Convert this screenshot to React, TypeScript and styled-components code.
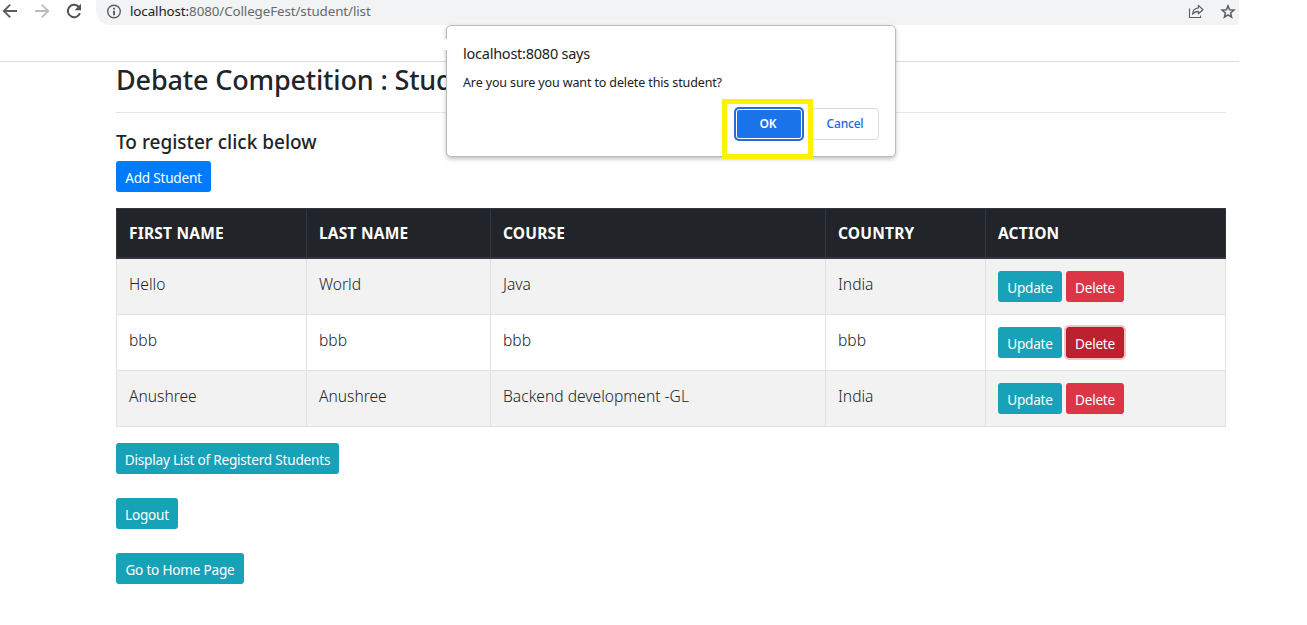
import React from "react";
import styled, { createGlobalStyle, css } from "styled-components";

const GlobalStyle = createGlobalStyle`
  *, *::before, *::after { box-sizing: border-box; }
  body {
    margin: 0;
    background: #fff;
    color: #212529;
    font-family: "Noto Sans", "Open Sans", sans-serif;
    font-size: 16px;
    line-height: 1.5;
    overflow: hidden;
  }
`;

const Screen = styled.div`
  position: relative;
  width: 1307px;
  height: 625px;
  overflow: hidden;
`;

const Toolbar = styled.header`
  display: flex;
  width: 1239px;
  height: 61px;
  align-items: flex-start;
`;

const NavIcons = styled.div`
  display: flex;
  gap: 16px;
  padding: 3px 0 0 2px;
  width: 96px;
  svg { display: block; flex: none; }
`;

const AddressBar = styled.div`
  display: flex;
  flex: 1;
  height: 25px;
  padding: 0 4px 2px 10px;
  align-items: center;
  background: #f1f3f4;
  border-radius: 0 0 4px 14px;
  svg { display: block; flex: none; }
`;

const Url = styled.span`
  flex: 1;
  margin: -1px 0 0 8px;
  font-size: 13.4px;
  line-height: 20px;
  letter-spacing: -0.11px;
  color: #666a6e;
  b { font-weight: 400; color: #202124; }
`;

const BarActions = styled.div`
  display: flex;
  gap: 16px;
  margin-right: -1px;
`;

const Page = styled.main`
  width: 1239px;
  padding: 0 13px 0 116px;
  border-top: 1px solid #d9dbdd;
`;

const Title = styled.h3`
  margin: 0;
  height: 34px;
  font-size: 27px;
  font-weight: 500;
  line-height: 36px;
  letter-spacing: -0.16px;
  white-space: nowrap;
`;

const Rule = styled.hr`
  margin: 16px 0;
  border: 0;
  border-top: 1px solid #e5e5e5;
`;

const Subtitle = styled.h5`
  margin: 0 0 8px;
  height: 24px;
  font-size: 19px;
  font-weight: 500;
  line-height: 26px;
`;

const tones = { primary: "#007bff", info: "#17a2b8", danger: "#dc3545" };

const Button = styled.button<{ $tone: keyof typeof tones; $w: number; $pressed?: boolean }>`
  display: block;
  flex: none;
  width: ${(p) => p.$w}px;
  height: 31px;
  padding: 2px 0 0;
  border: 0;
  border-radius: 3px;
  background: ${(p) => tones[p.$tone]};
  color: #fff;
  font: 400 13.6px/21px "Noto Sans", sans-serif;
  letter-spacing: -0.22px;
  white-space: nowrap;
  ${(p) =>
    p.$pressed &&
    css`
      background: #bd2130;
      border: 1px solid #b21f2d;
      box-shadow: 0 0 0 2px rgba(225, 83, 97, 0.35);
    `}
`;

const Table = styled.table`
  width: 1109px;
  margin: 16px 0;
  table-layout: fixed;
  border-collapse: collapse;
`;

const Th = styled.th`
  height: 49px;
  padding: 0 12px;
  border: 1px solid #32383e;
  border-bottom-width: 2px;
  background: #212529;
  color: #fff;
  font-size: 15.5px;
  font-weight: 700;
  line-height: 24px;
  letter-spacing: 0.2px;
  text-align: left;
`;

const Tr = styled.tr`
  height: 56px;
  &:nth-child(odd) { background: #f2f2f2; }
`;

const Td = styled.td`
  padding: 12px;
  border: 1px solid #dee2e6;
  line-height: 26px;
  font-size: 15.6px;
  font-weight: 300;
  vertical-align: top;
`;

const Actions = styled.div`
  display: flex;
  gap: 4px;
`;

const Links = styled.nav`
  display: flex;
  flex-direction: column;
  gap: 24px;
`;

const Dialog = styled.section`
  position: absolute;
  left: 446px;
  top: 25px;
  width: 450px;
  height: 132px;
  padding: 17px 17px 0;
  background: #fff;
  border: 1px solid #b9bbbd;
  border-radius: 5px;
  box-shadow: 0 2px 4px rgba(0, 0, 0, 0.25);
  color: #202124;
`;

const DialogTitle = styled.div`
  margin-left: -1px;
  font-size: 14.5px;
  line-height: 20px;
  letter-spacing: -0.24px;
`;

const DialogText = styled.div`
  margin: 10px 0 0 -1px;
  font-size: 12.5px;
  line-height: 20px;
  letter-spacing: -0.13px;
`;

const DialogButtons = styled.div`
  display: flex;
  justify-content: flex-end;
  align-items: center;
  gap: 9px;
  margin: 15px -1px 0 0;
`;

const DialogButton = styled.button<{ $primary?: boolean }>`
  width: 68px;
  height: 32px;
  padding: 0;
  border: 1px solid #dadce0;
  border-radius: 4px;
  background: #fff;
  color: #2267dc;
  font: 500 12px/20px "Noto Sans", sans-serif;
  letter-spacing: -0.2px;
  ${(p) =>
    p.$primary &&
    css`
      width: 66px;
      height: 30px;
      padding-right: 2px;
      border-color: #fff;
      border-radius: 3px;
      background: #1a73e8;
      color: #fff;
      font-weight: 600;
      box-shadow: 0 0 0 2px #2a69cf;
    `}
`;

const Highlight = styled.div`
  position: absolute;
  left: 722px;
  top: 99px;
  width: 91px;
  height: 60px;
  border: 5px solid #fff200;
`;

const EdgeGap = styled.div`
  position: absolute;
  left: 440px;
  top: 39px;
  width: 7px;
  height: 11px;
  background: #fff;
`;

const BackIcon = () => (
  <svg width="16" height="16" viewBox="0 0 16 16" fill="none" stroke="#5a5d61" strokeWidth="1.9">
    <path d="M15 8H2.5M8.2 1.6 1.8 8l6.4 6.4" />
  </svg>
);

const ForwardIcon = () => (
  <svg width="16" height="16" viewBox="0 0 16 16" fill="none" stroke="#bbbdc0" strokeWidth="1.9">
    <path d="M1 8h12.5M7.8 1.6 14.2 8l-6.4 6.4" />
  </svg>
);

const ReloadIcon = () => (
  <svg width="16" height="16" viewBox="0 0 16 16">
    <path d="M13.9 10.1A6.2 6.2 0 1 1 12.5 3.7L14 5.2" fill="none" stroke="#505357" strokeWidth="2" />
    <path d="M15 .8v6.4H8.6z" fill="#505357" />
  </svg>
);

const InfoIcon = () => (
  <svg width="16" height="16" viewBox="0 0 16 16">
    <circle cx="8" cy="7.5" r="6.3" fill="none" stroke="#5a5d61" strokeWidth="1.4" />
    <path d="M7.1 3.8h1.8v1.8H7.1zM7.1 6.7h1.8v4.6H7.1z" fill="#505357" />
  </svg>
);

const ShareIcon = () => (
  <svg width="16" height="16" viewBox="0 0 16 16" fill="none" stroke="#5a5d61">
    <path d="M1.5 4.5v9h11v-2" strokeWidth="1.1" />
    <path d="M4.6 10.2C4.6 6.2 7 4.2 10.4 4V1.4L15 5.7l-4.6 4V7.4C8 7.4 6.1 8.1 4.6 10.2z" strokeWidth="1.2" strokeLinejoin="round" />
  </svg>
);

const StarIcon = () => (
  <svg width="16" height="16" viewBox="0 0 16 16" fill="none" stroke="#5a5d61" strokeWidth="1.5">
    <path d="m8 1.9 1.6 3.9 4.3.3-3.3 2.8 1 4.2L8 10.9l-3.6 2.2 1-4.2-3.3-2.8 4.3-.3z" />
  </svg>
);

const columns = [
  { label: "FIRST NAME", width: 190 },
  { label: "LAST NAME", width: 184 },
  { label: "COURSE", width: 335 },
  { label: "COUNTRY", width: 160 },
  { label: "ACTION", width: 240 },
];

const students = [
  ["Hello", "World", "Java", "India"],
  ["bbb", "bbb", "bbb", "bbb"],
  ["Anushree", "Anushree", "Backend development -GL", "India"],
];

const selectedStudent = 1;

export default function App() {
  return (
    <Screen>
      <GlobalStyle />
      <Toolbar>
        <NavIcons>
          <BackIcon />
          <ForwardIcon />
          <ReloadIcon />
        </NavIcons>
        <AddressBar>
          <InfoIcon />
          <Url><b>localhost:</b>8080/CollegeFest/student/list</Url>
          <BarActions>
            <ShareIcon />
            <StarIcon />
          </BarActions>
        </AddressBar>
      </Toolbar>
      <Page>
        <Title>Debate Competition : Stud</Title>
        <Rule />
        <Subtitle>To register click below</Subtitle>
        <Button $tone="primary" $w={95}>Add Student</Button>
        <Table>
          <colgroup>
            {columns.map((c) => <col key={c.label} width={c.width} />)}
          </colgroup>
          <thead>
            <tr>{columns.map((c) => <Th key={c.label}>{c.label}</Th>)}</tr>
          </thead>
          <tbody>
            {students.map((cells, row) => (
              <Tr key={row}>
                {cells.map((text, i) => <Td key={i}>{text}</Td>)}
                <Td>
                  <Actions>
                    <Button $tone="info" $w={64}>Update</Button>
                    <Button $tone="danger" $w={58} $pressed={row === selectedStudent}>Delete</Button>
                  </Actions>
                </Td>
              </Tr>
            ))}
          </tbody>
        </Table>
        <Links>
          <Button $tone="info" $w={223}>Display List of Registerd Students</Button>
          <Button $tone="info" $w={62}>Logout</Button>
          <Button $tone="info" $w={128}>Go to Home Page</Button>
        </Links>
      </Page>
      <Dialog>
        <DialogTitle>localhost:8080 says</DialogTitle>
        <DialogText>Are you sure you want to delete this student?</DialogText>
        <DialogButtons>
          <DialogButton $primary>OK</DialogButton>
          <DialogButton>Cancel</DialogButton>
        </DialogButtons>
      </Dialog>
      <EdgeGap />
      <Highlight />
    </Screen>
  );
}
